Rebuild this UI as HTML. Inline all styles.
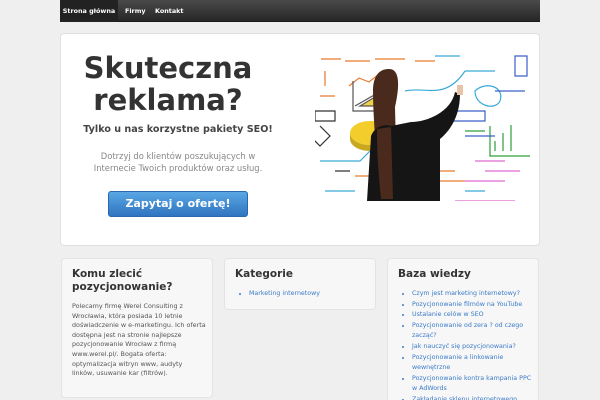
<!DOCTYPE html>
<html><head><meta charset="utf-8">
<style>
*{margin:0;padding:0;box-sizing:border-box}
html,body{width:600px;height:400px;overflow:hidden}
body{background:#efefef;font-family:"DejaVu Sans","Liberation Sans",sans-serif;position:relative}
.nav{position:absolute;left:60px;top:0;width:480px;height:22px;background:linear-gradient(#4a4a4a,#262626);border-bottom:1px solid #1a1a1a}
.nav span{position:absolute;top:0;height:22px;line-height:22px;color:#fff;font-size:6.4px;font-weight:bold}
.nav .act{left:0;width:58px;background:#222;text-align:center}
.hero{position:absolute;left:60px;top:33px;width:480px;height:213px;background:#fff;border:1px solid #e0e0e0;border-radius:4px}
h1{position:absolute;left:0;width:214px;top:18px;text-align:center;font-size:29px;line-height:32px;color:#333;font-weight:bold}
.sub{position:absolute;left:10px;width:214px;top:90px;text-align:center;font-size:9.6px;font-weight:bold;color:#444}
.p{position:absolute;left:10px;width:214px;top:116px;text-align:center;font-size:8.4px;line-height:12px;color:#888}
.btn{position:absolute;left:47px;top:157px;width:140px;height:26px;border-radius:3px;background:linear-gradient(#5aa7e4,#2f74c0);border:1px solid #2a68ad;color:#fff;font-weight:bold;font-size:11px;line-height:24px;text-align:center}
.box{position:absolute;top:258px;width:152px;background:#f7f7f7;border:1px solid #e3e3e3;border-radius:4px;padding:9px 6px 8px 10px}
.box h2{font-size:10.5px;line-height:13px;color:#333;font-weight:bold;margin:0 0 8px}
.box p{font-size:6.4px;line-height:9.6px;color:#555}
.box ul{margin-left:14px;font-size:6.3px;line-height:10.6px;color:#3a7bc8}
.box li{list-style:disc;color:#3a7bc8}
</style></head><body>
<div class="nav"><span class="act">Strona główna</span><span style="left:65px">Firmy</span><span style="left:95px">Kontakt</span></div>
<div class="hero">
<h1>Skuteczna<br>reklama?</h1>
<div class="sub">Tylko u nas korzystne pakiety SEO!</div>
<div class="p">Dotrzyj do klientów poszukujących w<br>Internecie Twoich produktów oraz usług.</div>
<div class="btn">Zapytaj o ofertę!</div>
<svg style="position:absolute;left:254px;top:17px" width="218" height="150" viewBox="0 0 218 150">
<g fill="none" stroke-width="1.2">
<path d="M6 8h20M30 10h25M60 8h30M10 20v15M34 35l10-8 10 4 15-12M100 10h20M5 45h15" stroke="#e77a2a"/>
<path d="M38 30v30h40M40 55l35-20" stroke="#555"/>
<path d="M45 55l25-15v15z" fill="#f0d24a" stroke="#555"/>
<path d="M90 40c20-5 40 10 60-20M150 20h30M160 40c10-10 30-5 25 10-5 10-25 5-25-10zM120 5h25" stroke="#3aa9d8"/>
<path d="M175 75v30h40M180 100v-10M188 100v-18M196 100v-26M150 80h20" stroke="#2d9f3a"/>
<path d="M140 150h60M150 130h40M160 110h30M170 120h35" stroke="#e06ad0"/>
<path d="M5 110h40l20-20 20 20M10 140h30M150 140h20" stroke="#3aa9d8"/>
<path d="M0 60h20v10H0zM5 75l10 10-10 10-10-10M20 120h15" stroke="#333"/>
<path d="M130 60h40v10h-40zM150 85h30M200 5h12v20h-12zM180 40h30" stroke="#3a5fc8"/>
<path d="M40 125h30M110 130h40M115 120h25" stroke="#e77a2a"/>
</g>
<ellipse cx="55" cy="82" rx="20" ry="12" fill="#f2cd2c"/>
<path d="M35 82a20 12 0 0 0 40 0v6a20 12 0 0 1-40 0z" fill="#c9a81e"/>
<path d="M74 18c-12 0-16 10-16 22 0 30 4 60 4 96 6 4 14 4 20 0l-2-80c4-18 6-38-6-38z" fill="#4a2a1c"/>
<path d="M56 85c4-10 14-12 20-10l20-4c16 0 40-10 44-30l5 2c0 20-8 35-20 45v62H52z" fill="#151515"/>
<path d="M62 78c0 30 2 50 4 70h12l-2-72z" fill="#4a2a1c"/>
<rect x="142" y="34" width="6" height="10" fill="#e8c3a8"/>
</svg>
</div>
<div class="box" style="left:61px;height:140px"><h2>Komu zlecić pozycjonowanie?</h2><p>Polecamy firmę Werel Consulting z Wrocławia, która posiada 10 letnie doświadczenie w e-marketingu. Ich oferta dostępna jest na stronie najlepsze pozycjonowanie Wrocław z firmą www.werel.pl/. Bogata oferta: optymalizacja witryn www, audyty linków, usuwanie kar (filtrów).</p></div>
<div class="box" style="left:224px;height:52px"><h2>Kategorie</h2><ul><li>Marketing internetowy</li></ul></div>
<div class="box" style="left:387px;height:160px"><h2>Baza wiedzy</h2><ul><li>Czym jest marketing internetowy?</li><li>Pozycjonowanie filmów na YouTube</li><li>Ustalanie celów w SEO</li><li>Pozycjonowanie od zera ? od czego zacząć?</li><li>Jak nauczyć się pozycjonowania?</li><li>Pozycjonowanie a linkowanie wewnętrzne</li><li>Pozycjonowanie kontra kampania PPC w AdWords</li><li>Zakładanie sklepu internetowego</li></ul></div>
</body></html>
